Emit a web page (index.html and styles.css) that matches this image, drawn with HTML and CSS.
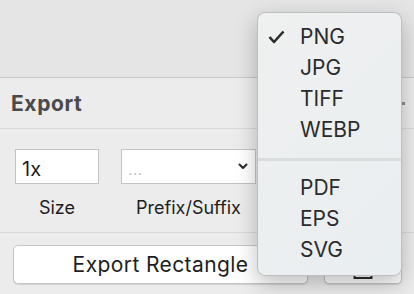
FILE: index.html
```html
<!DOCTYPE html>
<html lang="en">
<head>
  <meta charset="UTF-8">
  <meta name="viewport" content="width=device-width, initial-scale=1.0">
  <title>Export</title>
  <link rel="stylesheet" href="styles.css">
</head>
<body>

  <!-- Barra superiore vuota -->
  <div class="toolbar"></div>

  <!-- Intestazione del pannello -->
  <div class="panel-head">
    <h2>Export</h2>
    <span class="head-dot"></span>
  </div>

  <!-- Riga con dimensione e prefisso -->
  <div class="export-row">
    <div class="field-col col-size">
      <input class="field" type="text" value="1x">
      <label>Size</label>
    </div>
    <div class="field-col col-prefix">
      <div class="field select">
        <span class="placeholder">...</span>
        <svg class="chevron" width="10" height="7" viewBox="0 0 10 7">
          <polyline points="1.5,1.5 5,5 8.5,1.5" fill="none" stroke="#2a2a2a" stroke-width="2" stroke-linecap="round" stroke-linejoin="round"/>
        </svg>
      </div>
      <label>Prefix/Suffix</label>
    </div>
  </div>

  <!-- Pulsanti di esportazione -->
  <div class="actions">
    <button class="btn btn-main">Export Rectangle</button>
    <button class="btn btn-share">
      <svg width="24" height="28" viewBox="0 0 24 28">
        <path d="M8 10 H3.5 V26 H20.5 V10 H16" fill="none" stroke="#2a2a2a" stroke-width="2"/>
        <path d="M12 2 V17 M8 6 L12 2 L16 6" fill="none" stroke="#2a2a2a" stroke-width="2"/>
      </svg>
    </button>
  </div>

  <!-- Menu a tendina dei formati -->
  <ul class="format-menu">
    <li class="checked">
      <svg class="check" width="17" height="14" viewBox="0 0 17 14">
        <polyline points="1.5,7 6,12 15.5,1.5" fill="none" stroke="#2b2b2b" stroke-width="2.6" stroke-linejoin="round"/>
      </svg>
      PNG
    </li>
    <li>JPG</li>
    <li>TIFF</li>
    <li>WEBP</li>
    <li class="sep"></li>
    <li>PDF</li>
    <li>EPS</li>
    <li>SVG</li>
  </ul>

</body>
</html>
```

FILE: styles.css
```css
/* Stili globali */
* { margin: 0; padding: 0; box-sizing: border-box; }
body {
  width: 414px;
  height: 294px;
  overflow: hidden;
  position: relative;
  background-color: #ececec;
  color: #222;
  font-family: Inter, "Liberation Sans", sans-serif;
}

/* Barra superiore */
.toolbar {
  height: 78px;
  background-color: #e5e5e5;
  border-bottom: 1px solid #c9c9c9;
}

/* Intestazione pannello */
.panel-head {
  height: 51px;
  display: flex;
  align-items: center;
  padding: 0 9px 0 11px;
  border-bottom: 1px solid #d9d9d9;
}

.panel-head h2 {
  font-size: 21px;
  font-weight: 700;
  letter-spacing: 0.6px;
  color: #4a4a4a;
}

.head-dot {
  margin-left: auto;
  width: 3px;
  height: 3px;
  background-color: #8c8c8c;
}

/* Riga dei campi */
.export-row {
  height: 104px;
  display: flex;
  gap: 22px;
  padding: 20px 0 0 15px;
  border-bottom: 1px solid #d9d9d9;
}

.field-col {
  display: flex;
  flex-direction: column;
  align-items: center;
}

.field {
  height: 35px;
  background-color: #fff;
  border: 1px solid #c3c3c3;
  font-family: inherit;
  color: #1e1e1e;
}

.col-size .field {
  width: 84px;
  font-size: 20px;
  padding: 5px 0 0 6px;
  outline: none;
}

.select {
  width: 135px;
  display: flex;
  align-items: center;
  padding: 0 7px 0 6px;
}

.placeholder {
  font-family: "Liberation Sans", sans-serif;
  font-size: 17px;
  color: #bdbdbd;
  padding-top: 6px;
}

.chevron {
  margin-left: auto;
}

.field-col label {
  margin-top: 13px;
  font-size: 18px;
  line-height: 22px;
  color: #1e1e1e;
}

/* Pulsanti */
.actions {
  display: flex;
  gap: 16px;
  padding: 12px 12px 0 13px;
}

.btn {
  height: 39px;
  background-color: #fff;
  border: 1px solid #c6c6c6;
  border-radius: 5px;
  box-shadow: 0 1px 1px rgba(0, 0, 0, 0.12);
  font-family: inherit;
  font-size: 21px;
  letter-spacing: 0.4px;
  color: #1e1e1e;
}

.btn-main {
  width: 295px;
}

.btn-share {
  width: 78px;
  display: flex;
  justify-content: center;
  align-items: flex-end;
  padding-bottom: 3px;
}

/* Menu dei formati */
.format-menu {
  position: absolute;
  left: 257px;
  top: 12px;
  width: 145px;
  list-style: none;
  padding: 8px 0 10px;
  background: linear-gradient(135deg, #eff0f0, #e9eef0);
  border: 1px solid rgba(0, 0, 0, 0.2);
  border-radius: 8px;
  box-shadow: 0 8px 22px rgba(0, 0, 0, 0.25);
}

.format-menu li {
  position: relative;
  height: 31px;
  line-height: 31px;
  padding-left: 42px;
  font-size: 21px;
  color: #2b2b2b;
}

.format-menu .check {
  position: absolute;
  left: 10px;
  top: 9px;
}

.format-menu .sep {
  height: 3px;
  margin: 13px 0 11px;
  padding: 0;
  background-color: #d8dcdd;
}
```
